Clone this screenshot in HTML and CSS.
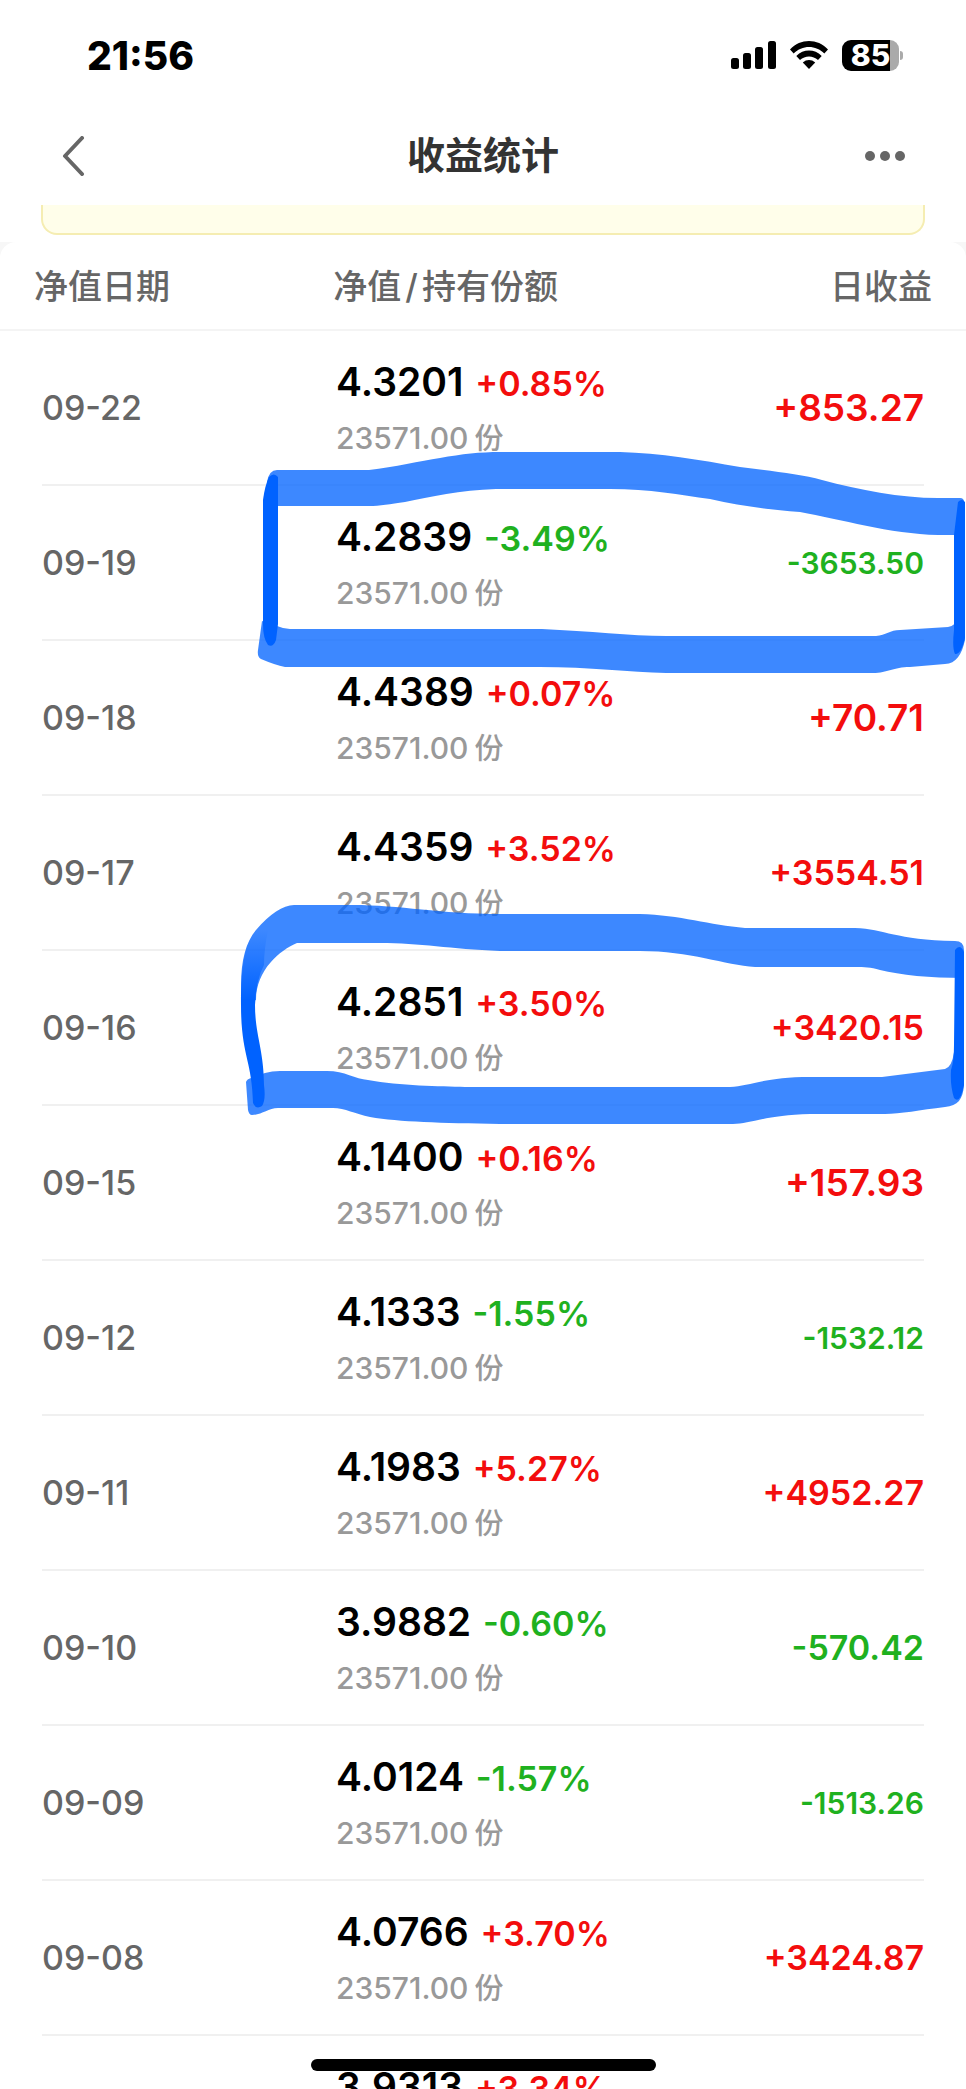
FILE: index.html
```html
<!DOCTYPE html>
<html lang="zh-CN">
<head>
    <meta charset="UTF-8">
    <meta name="viewport" content="width=device-width, initial-scale=1.0">
    <title>收益统计</title>
    <link rel="stylesheet" href="styles.css">
</head>
<body>
    <div class="screen">
        <div class="status-bar">
            <span class="clock">21:56</span>
            <div class="status-icons">
                <svg width="45" height="28" viewBox="0 0 45 28">
                    <rect x="0" y="17" width="8" height="11" rx="2.5"/>
                    <rect x="12" y="12" width="8" height="16" rx="2.5"/>
                    <rect x="24" y="6" width="8" height="22" rx="2.5"/>
                    <rect x="37" y="0" width="8" height="28" rx="2.5"/>
                </svg>
                <svg width="38" height="28" viewBox="0 0 38 28">
                    <path d="M0 8.5C10.500-2.800 27.500-2.800 38 8.500L34.300 12.500C26 3.800 12 3.800 3.700 12.500Z"/>
                    <path d="M6.300 15C13.500 7.800 24.500 7.800 31.700 15L28 19C23 14.200 15 14.200 10 19Z"/>
                    <path d="M12.800 21.500C16.500 18.200 21.500 18.200 25.200 21.500L19 28Z"/>
                </svg>
                <div class="battery"><span class="battery-level">85</span></div>
            </div>
        </div>

        <header class="nav-bar">
            <button class="nav-button" type="button" aria-label="返回">
                <svg width="24" height="40" viewBox="0 0 24 40" fill="none" stroke="#666" stroke-width="4" stroke-linecap="round" stroke-linejoin="round">
                    <path d="M21 2L4 20L21 38"/>
                </svg>
            </button>
            <h1>收益统计</h1>
            <button class="nav-button nav-more" type="button" aria-label="更多">
                <svg width="40" height="10" viewBox="0 0 40 10" fill="#666">
                    <circle cx="5" cy="5" r="5"/>
                    <circle cx="20" cy="5" r="5"/>
                    <circle cx="35" cy="5" r="5"/>
                </svg>
            </button>
        </header>

        <div class="notice"></div>

        <main class="panel">
            <table class="income-table">
                <thead>
                    <tr>
                        <th>净值日期</th>
                        <th>净值<span class="slash">/</span>持有份额</th>
                        <th>日收益</th>
                    </tr>
                </thead>
                <tbody>
                    <tr>
                        <td class="date">09-22</td>
                        <td><div class="nav-value">4.3201 <span class="rate up">+0.85%</span></div><div class="shares">23571.00<span class="unit">份</span></div></td>
                        <td class="profit large up">+853.27</td>
                    </tr>
                    <tr>
                        <td class="date">09-19</td>
                        <td><div class="nav-value">4.2839 <span class="rate down">-3.49%</span></div><div class="shares">23571.00<span class="unit">份</span></div></td>
                        <td class="profit small down">-3653.50</td>
                    </tr>
                    <tr>
                        <td class="date">09-18</td>
                        <td><div class="nav-value">4.4389 <span class="rate up">+0.07%</span></div><div class="shares">23571.00<span class="unit">份</span></div></td>
                        <td class="profit large up">+70.71</td>
                    </tr>
                    <tr>
                        <td class="date">09-17</td>
                        <td><div class="nav-value">4.4359 <span class="rate up">+3.52%</span></div><div class="shares">23571.00<span class="unit">份</span></div></td>
                        <td class="profit up">+3554.51</td>
                    </tr>
                    <tr>
                        <td class="date">09-16</td>
                        <td><div class="nav-value">4.2851 <span class="rate up">+3.50%</span></div><div class="shares">23571.00<span class="unit">份</span></div></td>
                        <td class="profit up">+3420.15</td>
                    </tr>
                    <tr>
                        <td class="date">09-15</td>
                        <td><div class="nav-value">4.1400 <span class="rate up">+0.16%</span></div><div class="shares">23571.00<span class="unit">份</span></div></td>
                        <td class="profit large up">+157.93</td>
                    </tr>
                    <tr>
                        <td class="date">09-12</td>
                        <td><div class="nav-value">4.1333 <span class="rate down">-1.55%</span></div><div class="shares">23571.00<span class="unit">份</span></div></td>
                        <td class="profit small down">-1532.12</td>
                    </tr>
                    <tr>
                        <td class="date">09-11</td>
                        <td><div class="nav-value">4.1983 <span class="rate up">+5.27%</span></div><div class="shares">23571.00<span class="unit">份</span></div></td>
                        <td class="profit up">+4952.27</td>
                    </tr>
                    <tr>
                        <td class="date">09-10</td>
                        <td><div class="nav-value">3.9882 <span class="rate down">-0.60%</span></div><div class="shares">23571.00<span class="unit">份</span></div></td>
                        <td class="profit down">-570.42</td>
                    </tr>
                    <tr>
                        <td class="date">09-09</td>
                        <td><div class="nav-value">4.0124 <span class="rate down">-1.57%</span></div><div class="shares">23571.00<span class="unit">份</span></div></td>
                        <td class="profit small down">-1513.26</td>
                    </tr>
                    <tr>
                        <td class="date">09-08</td>
                        <td><div class="nav-value">4.0766 <span class="rate up">+3.70%</span></div><div class="shares">23571.00<span class="unit">份</span></div></td>
                        <td class="profit up">+3424.87</td>
                    </tr>
                    <tr>
                        <td></td>
                        <td><div class="nav-value">3.9313 <span class="rate up">+3.34%</span></div><div class="shares"></div></td>
                        <td></td>
                    </tr>
                </tbody>
            </table>
        </main>

        <!-- 09-19 和 09-16 两行的手绘标记 -->
        <svg class="marker" viewBox="0 0 966 1200" preserveAspectRatio="none">
            <defs>
                <linearGradient id="fade" gradientUnits="userSpaceOnUse" x1="0" y1="930" x2="0" y2="1000">
                    <stop offset="0" stop-color="#0062ff" stop-opacity="0"/>
                    <stop offset="1" stop-color="#0062ff"/>
                </linearGradient>
            </defs>
            <g class="marker-soft">
                <path d="M267 482Q269 470 277 470H369C395 467 420 461 440 458C462 454 480 452 500 452H620C660 453 700 460 740 467C770 471 800 474 822 480C860 490 900 498 938 498H960Q964 498 964 502V535H938C890 534 840 519 800 512C765 509 740 506 710 499C680 495 650 489 610 489H496C460 490 430 497 405 502C390 504 380 506 369 506H266Z"/>
                <path d="M262 621L277 626Q284 629 290 629H542C590 631 630 636 666 636H876C886 635 890 630 900 630L948 627Q956 626 957 618L965 620V640C962 654 956 664 945 664L910 667C893 667 888 673 873 673H666C630 672 590 667 540 667H285Q275 665 261 659Q257 657 258 650Z"/>
                <path d="M241 985C241 960 246 942 256 930C270 914 283 905 294 905H353C400 905 440 914 500 914H640C680 915 710 925 745 928H855C885 929 895 940 955 941Q964 941 964 950V978C930 978 900 975 880 970C870 967 865 967 855 967H755C725 965 690 951 640 951H500C450 949 420 943 380 943H297C280 950 256 970 256 1000L241 1005Z"/>
                <path d="M246 1082Q247 1079 251 1078L265 1073Q272 1071 280 1071H327C345 1071 355 1079 368 1080C400 1086 440 1086 465 1087H730C750 1086 765 1077 810 1077H882L945 1069Q952 1067 954 1052L964 1060V1085C963 1099 958 1106 945 1107C920 1110 900 1114 885 1114H810C765 1115 750 1124 733 1124H500C440 1123 400 1122 370 1117C355 1114 345 1108 333 1108H278C268 1108 262 1115 252 1115Q249 1115 248 1110Z"/>
            </g>
            <g class="marker-solid">
                <path d="M269 477Q274 472 278 477V624L276 640Q273 648 268 645Q263 638 263 625V500Q265 485 269 477Z"/>
                <path d="M958 502Q962 498 965 502V638Q961 655 955 654Q952 648 954 630L954 535Z"/>
                <path fill="url(#fade)" d="M256 930L268 930Q264 950 264 965Q256 980 255 1005C255 1035 264 1050 264 1085Q266 1100 262 1106Q256 1110 253 1103C252 1060 241 1055 241 1005C241 960 246 942 256 930Z"/>
                <path d="M955 950Q960 943 964 952V1085Q960 1105 954 1098Q950 1085 951 1070Q954 1062 954 1045Z"/>
            </g>
        </svg>

        <div class="home-indicator"></div>
    </div>
</body>
</html>
```

FILE: styles.css
```css
* {
    box-sizing: border-box;
}

body {
    margin: 0;
    background-color: #fff;
    font-family: Inter, "Noto Sans CJK SC", sans-serif;
    font-weight: 500;
    color: #000;
}

.screen {
    position: relative;
    display: flex;
    flex-direction: column;
    height: 100vh;
    overflow: hidden;
}

.status-bar {
    display: flex;
    flex-shrink: 0;
    justify-content: space-between;
    align-items: center;
    height: 110px;
    padding: 0 63px 0 87px;
}

.clock {
    font-size: 39px;
    font-weight: 800;
}

.status-icons {
    display: flex;
    align-items: center;
    gap: 14px;
}

.battery {
    position: relative;
    width: 57px;
    height: 31px;
    margin-right: 4px;
    border-radius: 9px;
    background: linear-gradient(to right, #000 85%, #aaa 85%);
    text-align: center;
}

.battery::after {
    content: "";
    position: absolute;
    top: 11px;
    right: -4px;
    width: 3px;
    height: 9px;
    border-radius: 0 3px 3px 0;
    background-color: #aaa;
}

.battery-level {
    font-size: 30px;
    font-weight: 800;
    line-height: 31px;
    color: #fff;
}

.nav-bar {
    display: flex;
    flex-shrink: 0;
    justify-content: space-between;
    align-items: center;
    height: 95px;
    padding: 0 61px 4px 61px;
}

.nav-bar h1 {
    margin: 0;
    padding-bottom: 6px;
    font-size: 38px;
    font-weight: 700;
    color: #333;
}

.nav-button {
    display: flex;
    align-items: center;
    width: 60px;
    height: 60px;
    padding: 0;
    border: none;
    background: none;
    cursor: pointer;
}

.nav-more {
    justify-content: flex-end;
}

.notice {
    flex-shrink: 0;
    height: 30px;
    margin: 0 41px 7px;
    border: 2px solid #f5edb2;
    border-top: none;
    border-radius: 0 0 16px 16px;
    background-color: #fffeea;
}

.panel {
    flex: 1;
    min-height: 0;
    overflow: hidden;
    background: linear-gradient(#f7f7f7 16px, #fff 16px);
}

.income-table {
    display: block;
    border-radius: 16px;
    background-color: #fff;
}

.income-table thead,
.income-table tbody {
    display: block;
}

.income-table tr {
    display: grid;
    grid-template-columns: repeat(3, 1fr);
    align-items: center;
}

.income-table thead tr {
    height: 89px;
    padding: 2px 34px 0;
    border-bottom: 2px solid #f4f4f4;
}

.income-table tbody tr {
    height: 155px;
    margin: 0 42px;
    border-bottom: 2px solid #f0f0f0;
}

th, td {
    padding: 0;
    text-align: left;
    white-space: nowrap;
}

th {
    font-size: 34px;
    font-weight: 500;
    line-height: 50px;
    color: #666;
}

th:last-child {
    text-align: right;
}

.slash {
    padding: 0 4px;
}

.date {
    font-size: 34px;
    color: #666;
}

.nav-value {
    padding-top: 4px;
    font-size: 39px;
    font-weight: 600;
    line-height: 55px;
}

.rate {
    margin-left: 2px;
    font-size: 34px;
}

.shares {
    height: 55px;
    font-size: 30px;
    line-height: 55px;
    color: #999;
}

.unit {
    padding-left: 6px;
    font-size: 29px;
}

.profit {
    font-size: 34px;
    font-weight: 600;
    text-align: right;
}

.large {
    font-size: 37px;
}

.small {
    font-size: 30px;
}

.up {
    color: #f30d0d;
}

.down {
    color: #1fb11f;
}

.marker {
    position: absolute;
    top: 0;
    left: 0;
    width: 100%;
    height: 1200px;
    pointer-events: none;
}

.marker-soft {
    fill: rgba(0, 98, 255, 0.76);
}

.marker-solid {
    fill: #0062ff;
}

.home-indicator {
    position: absolute;
    bottom: 18px;
    left: 50%;
    width: 345px;
    height: 12px;
    margin-left: -172px;
    border-radius: 6px;
    background-color: #000;
}
```
